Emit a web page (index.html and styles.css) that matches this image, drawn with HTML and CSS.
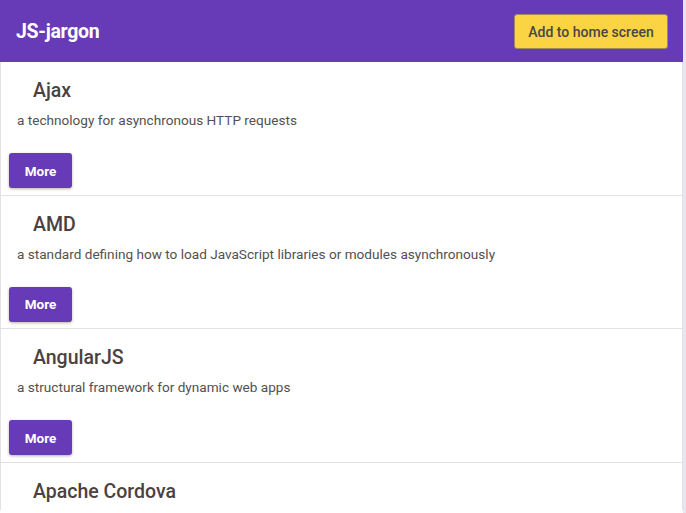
FILE: index.html
```html
<!DOCTYPE html>
<html lang="en">
<head>
<meta charset="utf-8">
<title>JS-jargon</title>
<link rel="stylesheet" href="styles.css">
</head>
<body>
<div class="app">
  <header class="topbar">
    <h1 class="brand">JS-jargon</h1>
    <button class="install">Add to home screen</button>
  </header>
  <main class="list">
    <article class="card">
      <h2 class="term">Ajax</h2>
      <p class="desc">a technology for asynchronous HTTP requests</p>
      <button class="more">More</button>
    </article>
    <article class="card">
      <h2 class="term">AMD</h2>
      <p class="desc">a standard defining how to load JavaScript libraries or modules asynchronously</p>
      <button class="more">More</button>
    </article>
    <article class="card">
      <h2 class="term">AngularJS</h2>
      <p class="desc">a structural framework for dynamic web apps</p>
      <button class="more">More</button>
    </article>
    <article class="card card-last">
      <h2 class="term">Apache Cordova</h2>
    </article>
  </main>
</div>
</body>
</html>
```
FILE: styles.css
```css
html {
  background: #e7e6ee;
  height: 100%;
  overflow: hidden;
}
body {
  margin: 0;
  font-family: Roboto, "Liberation Sans", Arial, sans-serif;
}
.app {
  width: 683px;
  background: #ffffff;
  min-height: 513px;
}
.topbar {
  height: 62px;
  background: #673ab7;
  display: flex;
  align-items: center;
  justify-content: space-between;
  padding: 0 15px 0 16px;
  box-sizing: border-box;
}
.brand {
  margin: 0;
  color: #ffffff;
  font-size: 19.5px;
  font-weight: 700;
  letter-spacing: -0.3px;
}
.install {
  height: 35px;
  width: 154px;
  margin-top: 1px;
  background: #fbd443;
  border: 1px solid #a08a60;
  border-radius: 3px;
  color: #4a4648;
  font-family: Roboto, "Liberation Sans", Arial, sans-serif;
  font-size: 14px;
  font-weight: 500;
  padding: 0;
}
.list {
  display: flex;
  flex-direction: column;
}
.card {
  display: flex;
  flex-direction: column;
  align-items: flex-start;
  padding: 17px 0 6.5px;
  border: 1px solid #e2e1e6;
  border-top: none;
}
.card-last {
  border-bottom: none;
}
.term {
  margin: 0 0 0 32px;
  font-size: 19.5px;
  line-height: 24px;
  font-weight: 500;
  color: #4b4141;
}
.desc {
  margin: 7px 0 0 16px;
  font-size: 13.6px;
  line-height: 20px;
  color: #545050;
}
.more {
  margin: 23px 0 0 8px;
  width: 63px;
  height: 35px;
  background: #673ab7;
  border: none;
  border-radius: 3px;
  box-shadow: 0 1px 3px rgba(0, 0, 0, 0.3);
  color: #ffffff;
  font-family: Roboto, "Liberation Sans", Arial, sans-serif;
  font-size: 13.5px;
  font-weight: 700;
  padding: 0;
}
```
